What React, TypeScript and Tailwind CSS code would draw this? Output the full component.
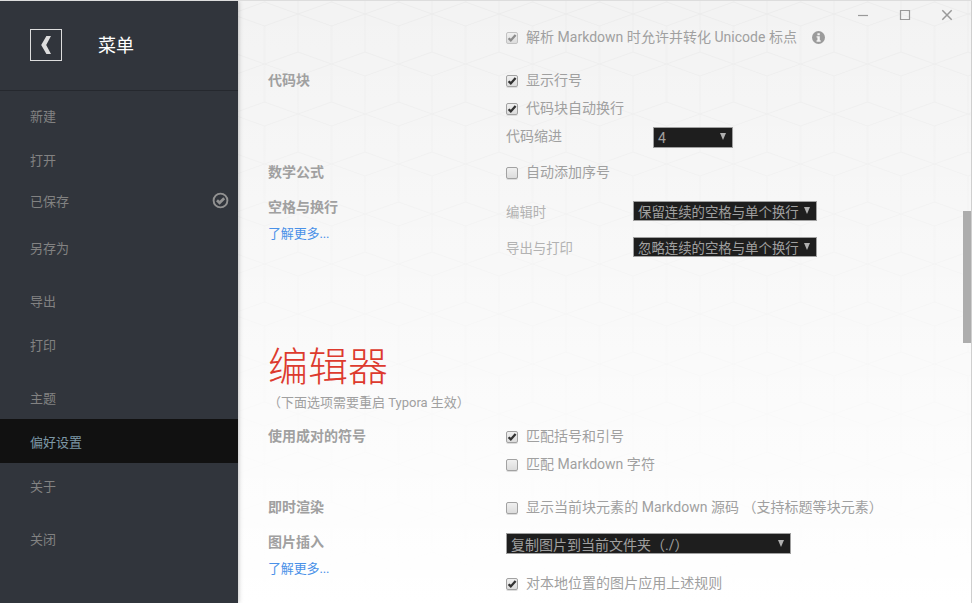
import type { ReactNode } from "react";

type MenuEntry = { label: string; gap?: boolean; active?: boolean; saved?: boolean };

const menu: MenuEntry[] = [
  { label: "新建" },
  { label: "打开" },
  { label: "已保存", saved: true },
  { label: "另存为" },
  { label: "导出", gap: true },
  { label: "打印" },
  { label: "主题", gap: true },
  { label: "偏好设置", active: true },
  { label: "关于" },
  { label: "关闭", gap: true },
];

function Sidebar() {
  return (
    <aside className="z-10 flex w-[238px] shrink-0 flex-col bg-[#31353c] shadow-[0_0_5px_rgba(0,0,0,0.3)]">
      <header className="flex h-[90px] items-center border-b border-[#25282e] pb-[2px] pl-[30px]">
        <div className="flex size-8 items-center justify-center border border-[#dddddd]">
          <svg width="10" height="18" viewBox="0 0 10 18" className="text-[#dddddd]">
            <path d="M5.4 0H10L5.2 9L10 18H5.4L0.2 9Z" fill="currentColor" />
          </svg>
        </div>
        <h1 className="ml-[36px] pt-[2px] text-[18px] leading-6 text-white">菜单</h1>
      </header>
      <nav className="pt-[2px] text-[13px]">
        {menu.map((m) => (
          <div
            key={m.label}
            className={
              "flex h-11 items-center pl-[30px] pr-[9px] " +
              (m.gap ? "mt-[9px] " : "") +
              (m.saved ? "pb-[2px] " : "pt-[4px] ") +
              (m.active ? "bg-[#111111] text-[#7d98a6]" : "text-[#828282]")
            }
          >
            <span className="flex-1 leading-5">{m.label}</span>
            {m.saved && (
              <svg width="17" height="17" viewBox="0 0 17 17" fill="none" stroke="#929292" className="-mt-[3px]">
                <circle cx="8.5" cy="8.5" r="6.9" strokeWidth="1.9" />
                <path d="M5 8.2L7.6 10.8L12.2 6.2" strokeWidth="2.7" />
              </svg>
            )}
          </div>
        ))}
      </nav>
    </aside>
  );
}

function Backdrop() {
  return (
    <svg className="absolute inset-0 -z-10" width="734" height="602">
      <defs>
        <pattern id="cubes" x="26.5" y="1" width="67" height="100" patternUnits="userSpaceOnUse">
          <path
            d="M0 24V100M67 24V100M33.5 -26V50M33.5 74V150M0 0L33.5 12L67 0M0 24L33.5 12L67 24M0 62L33.5 50L67 62M0 62L33.5 74L67 62M0 100L33.5 112L67 100"
            fill="none"
            stroke="#ececec"
            strokeWidth="1"
          />
        </pattern>
        <linearGradient id="fade" x1="0" y1="0" x2="0" y2="1">
          <stop offset="0" stopColor="#fff" stopOpacity="0" />
          <stop offset="1" stopColor="#fff" stopOpacity="1" />
        </linearGradient>
      </defs>
      <rect width="734" height="602" fill="#f3f3f3" />
      <rect width="734" height="602" fill="url(#cubes)" />
      <rect width="734" height="602" fill="url(#fade)" />
    </svg>
  );
}

function Check({ on = false, disabled = false, children }: { on?: boolean; disabled?: boolean; children: ReactNode }) {
  return (
    <div className="flex h-5 items-center">
      <span
        className={
          "mt-[2px] flex size-3 shrink-0 items-center justify-center rounded-[2px] border bg-linear-to-b from-[#f0f0f0] to-[#dcdcdc] " +
          (disabled ? "border-[#c2c2c2]" : "border-[#a2a2a2] shadow-[0_1px_0_#dddddd]")
        }
      >
        {on && (
          <svg width="10" height="10" viewBox="0 0 10 10" fill="none" stroke={disabled ? "#8d8d8d" : "#333333"}>
            <path d="M1.6 5.2L3.8 7.4L8.6 1.9" strokeWidth="2.3" />
          </svg>
        )}
      </span>
      <span className="ml-2 whitespace-pre tracking-[0.02px]">{children}</span>
    </div>
  );
}

function Select({ children, className }: { children: ReactNode; className: string }) {
  return (
    <div className={"flex h-[21px] items-center justify-between border border-[#a0a0a0] bg-[#1e1e1e] pl-1 pr-[6px] text-[#a0a0a0] " + className}>
      <span className="whitespace-pre pt-[2px] leading-[18px]">{children}</span>
      <svg width="6" height="7" viewBox="0 0 6 7" className="mb-px">
        <path d="M0 0H6L3 7Z" fill="#b0b0b0" />
      </svg>
    </div>
  );
}

function Row({ label, more, className, children }: { label?: string; more?: boolean; className: string; children: ReactNode }) {
  return (
    <section className={"flex " + className}>
      <div className="w-[238px] shrink-0">
        <div className="h-5 font-bold">{label}</div>
        {more && <a className="mt-[7px] block text-[13px] leading-5 tracking-[-0.15px] text-[#4a91e8]">了解更多...</a>}
      </div>
      <div>{children}</div>
    </section>
  );
}

function WindowButtons() {
  return (
    <svg width="96" height="12" viewBox="0 0 96 12" fill="none" stroke="#999999" className="absolute left-[620px] top-2">
      <path d="M0 6.5H10" strokeWidth="1.2" />
      <path d="M42.5 1.5H51.5V10.5H42.5Z" strokeWidth="1.2" />
      <path d="M84.3 1.3L93.7 10.7M93.7 1.3L84.3 10.7" strokeWidth="1.5" />
    </svg>
  );
}

export default function App() {
  return (
    <div className="flex h-[603px] w-[972px] overflow-hidden border-t border-[#dddddd] bg-white font-[Roboto,'Noto_Sans_CJK_SC',sans-serif]">
      <Sidebar />
      <main className="relative isolate flex-1 overflow-hidden border-r border-[#cfcfcf] pl-[30px] pt-[26px] text-[14px] leading-5 text-[#a0a0a0]">
        <Backdrop />
        <WindowButtons />
        <div className="absolute right-0 top-[210px] h-[132px] w-2 bg-[#adadad]" />

        <Row className="h-[43px]">
          <div className="flex items-center">
            <Check on disabled>解析 Markdown 时允许并转化 Unicode 标点</Check>
            <svg width="13" height="13" viewBox="0 0 12 12" className="ml-[15px]">
              <circle cx="6" cy="6" r="6" fill="#9b9b9b" />
              <path d="M5 2H7.2V3.9H5ZM4.2 4.9H7.2V8.6H8V9.9H4.2V8.6H5V6.1H4.2Z" fill="#f4f4f4" />
            </svg>
          </div>
        </Row>
        <Row label="代码块" className="h-[92px]">
          <div className="flex flex-col gap-2">
            <Check on>显示行号</Check>
            <Check on>代码块自动换行</Check>
            <div className="flex h-5 items-center">
              <span className="w-[147px]">代码缩进</span>
              <Select className="mt-[2px] w-20">4</Select>
            </div>
          </div>
        </Row>
        <Row label="数学公式" className="h-[35px]">
          <Check>自动添加序号</Check>
        </Row>
        <Row label="空格与换行" more className="h-[145px]">
          <div className="flex flex-col gap-4 pt-[5px] text-[13.4px]">
            <div className="flex h-5 items-center">
              <span className="w-[127px] pt-[2px] text-[#b2b2b2]">编辑时</span>
              <Select className="-mt-[3px] h-5! w-[184px] [&>span]:pt-[4px]">保留连续的空格与单个换行</Select>
            </div>
            <div className="flex h-5 items-center">
              <span className="w-[127px] pt-[2px] text-[#b2b2b2]">导出与打印</span>
              <Select className="-mt-[3px] h-5! w-[184px] [&>span]:pt-[4px]">忽略连续的空格与单个换行</Select>
            </div>
          </div>
        </Row>
        <div className="h-[84px] pt-px">
          <h2 className="h-[50px] text-[40px] font-light leading-[50px] text-[#dd3a2e]">编辑器</h2>
          <p className="text-[13px] leading-5">（下面选项需要重启 Typora 生效）</p>
        </div>
        <Row label="使用成对的符号" className="h-[71px]">
          <div className="flex flex-col gap-2">
            <Check on>匹配括号和引号</Check>
            <Check>匹配 Markdown 字符</Check>
          </div>
        </Row>
        <Row label="即时渲染" className="h-[35px]">
          <Check>显示当前块元素的 Markdown 源码 （支持标题等块元素）</Check>
        </Row>
        <Row label="图片插入" more className="h-[71px]">
          <Select className="mt-[1px] mb-[19px] w-[285px]">复制图片到当前文件夹（./）</Select>
          <Check on>对本地位置的图片应用上述规则</Check>
        </Row>
      </main>
    </div>
  );
}
